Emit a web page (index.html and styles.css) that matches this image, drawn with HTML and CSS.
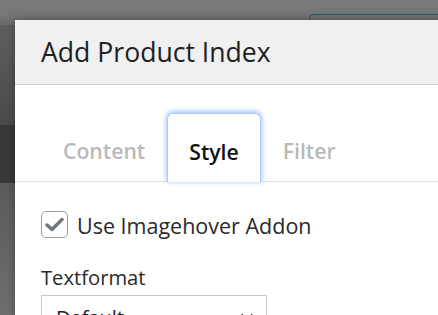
FILE: index.html
```html
<!DOCTYPE html>
<html lang="en">
<head>
    <meta charset="UTF-8">
    <meta name="viewport" content="width=device-width, initial-scale=1.0">
    <title>Add Product Index</title>
    <link rel="stylesheet" href="styles.css">
</head>
<body>
    <div class="page">
        <div class="page-top">
            <div class="page-button"></div>
        </div>
        <div class="page-side">
            <div class="side-a"></div>
            <div class="side-b"></div>
            <div class="side-c"></div>
        </div>
    </div>

    <div class="modal">
        <div class="modal-header">
            <h1>Add Product Index</h1>
        </div>
        <div class="tabs">
            <span class="tab">Content</span>
            <span class="tab active">Style</span>
            <span class="tab">Filter</span>
        </div>
        <div class="modal-body">
            <label class="check">
                <span class="box">
                    <svg width="19" height="15" viewBox="0 0 19 15"><path d="M2 8 L7 12.5 L17 2.5" fill="none" stroke="#6c747c" stroke-width="3.4" stroke-linecap="round" stroke-linejoin="round"/></svg>
                </span>
                <span class="check-text">Use Imagehover Addon</span>
            </label>
            <div class="field-label">Textformat</div>
            <div class="select">
                <span>Default</span>
                <svg width="14" height="9" viewBox="0 0 14 9"><path d="M1.5 1.5 L7 7 L12.5 1.5" fill="none" stroke="#333" stroke-width="2"/></svg>
            </div>
        </div>
    </div>
</body>
</html>
```

FILE: styles.css
```css
body {
    margin: 0;
    width: 438px;
    height: 315px;
    overflow: hidden;
    background-color: #767676;
    font-family: "Open Sans", "Noto Sans", sans-serif;
    position: relative;
}
.page {
    height: 315px;
    display: flex;
    flex-direction: column;
}
.page-top {
    height: 25px;
    background: linear-gradient(#7a7a7a, #767676 60%, #6a6a6a);
    padding-left: 309px;
    padding-top: 14px;
    box-sizing: border-box;
}
.page-button {
    height: 20px;
    border: 1.5px solid #1f5870;
    border-right: none;
    border-radius: 5px 0 0 0;
}
.page-side {
    width: 15px;
    flex: 1;
    display: flex;
    flex-direction: column;
}
.side-a {
    height: 100px;
    background: linear-gradient(#5e5e5e, #4a4a4a);
}
.side-b {
    height: 58px;
    background-color: #383838;
}
.side-c {
    flex: 1;
    background: linear-gradient(#5a5a5a, #6e6e6e);
}
.modal {
    position: absolute;
    left: 15px;
    top: 20px;
    right: -20px;
    bottom: -40px;
    background-color: #fff;
    box-shadow: 0 0 8px rgba(0, 0, 0, 0.3);
}
.modal-header {
    height: 64px;
    background-color: #f0f0f0;
    border-bottom: 1px solid #cfcfcf;
    padding-left: 26px;
    display: flex;
    align-items: center;
}
.modal-header h1 {
    margin: 0;
    font-size: 26.6px;
    font-weight: 400;
    color: #212121;
}
.tabs {
    margin-top: 28px;
    padding-left: 26px;
    height: 68px;
    border-bottom: 1px solid #e2e2e2;
    display: flex;
}
.tab {
    padding: 0 22px;
    font-size: 21.2px;
    font-weight: 600;
    color: #b9b9b9;
    display: flex;
    align-items: center;
    padding-top: 6px;
    height: 68px;
    box-sizing: border-box;
}
.tab.active {
    color: #111;
    background-color: #fff;
    border: 1px solid #a9c9fb;
    border-bottom: none;
    border-radius: 6px 6px 0 0;
    box-shadow: 0 -1px 5px 1px #a6c6fb;
    height: 69px;
    padding: 6px 21px 0;
    position: relative;
}
.modal-body {
    padding: 26px 26px 0;
}
.check {
    display: flex;
    align-items: center;
    font-size: 21.5px;
    color: #2a2a2a;
}
.check-text {
    padding-top: 3px;
}
.box {
    width: 25px;
    height: 25px;
    border: 1.5px solid #9a9a9a;
    border-radius: 5px;
    margin-right: 9px;
    display: flex;
    align-items: center;
    justify-content: center;
}
.field-label {
    margin-top: 23px;
    font-size: 20.2px;
    color: #2a2a2a;
}
.select {
    margin-top: 4px;
    width: 226px;
    height: 44px;
    border: 1px solid #c8c8c8;
    display: flex;
    align-items: center;
    justify-content: space-between;
    padding: 0 12px 0 14px;
    box-sizing: border-box;
    font-size: 20px;
    color: #222;
}
```
